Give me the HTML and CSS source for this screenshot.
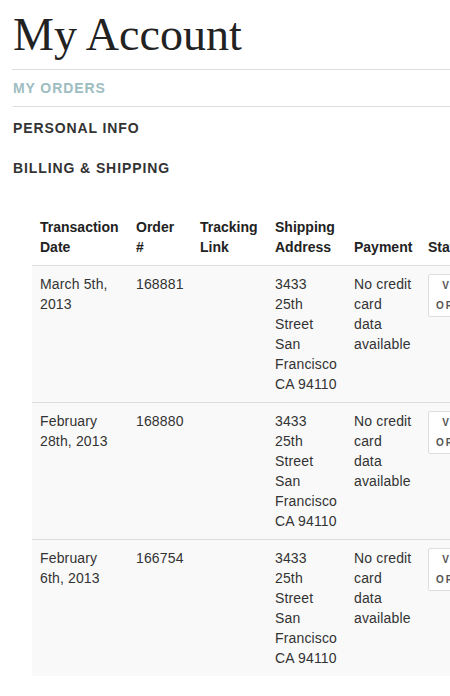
FILE: index.html
```html
<!DOCTYPE html>
<html lang="en">
<head>
<meta charset="utf-8">
<title>My Account</title>
<link rel="stylesheet" href="styles.css">
</head>
<body>
<div class="page">
  <h1 class="title">My Account</h1>
  <ul class="nav">
    <li class="nav-item active">My Orders</li>
    <li class="nav-item">Personal Info</li>
    <li class="nav-item">Billing &amp; Shipping</li>
  </ul>
  <table class="orders">
    <thead>
      <tr>
        <th class="c-date">Transaction Date</th>
        <th class="c-order">Order #</th>
        <th class="c-track">Tracking Link</th>
        <th class="c-addr">Shipping Address</th>
        <th class="c-pay">Payment</th>
        <th class="c-status">Status</th>
      </tr>
    </thead>
    <tbody>
      <tr>
        <td>March 5th, 2013</td>
        <td>168881</td>
        <td></td>
        <td>3433 25th Street San Francisco <span class="nw">CA 94110</span></td>
        <td>No credit card data available</td>
        <td><span class="btn">View Order</span></td>
      </tr>
      <tr>
        <td>February 28th, 2013</td>
        <td>168880</td>
        <td></td>
        <td>3433 25th Street San Francisco <span class="nw">CA 94110</span></td>
        <td>No credit card data available</td>
        <td><span class="btn">View Order</span></td>
      </tr>
      <tr class="last">
        <td>February 6th, 2013</td>
        <td>166754</td>
        <td></td>
        <td>3433 25th Street San Francisco <span class="nw">CA 94110</span></td>
        <td>No credit card data available</td>
        <td><span class="btn">View Order</span></td>
      </tr>
    </tbody>
  </table>
</div>
</body>
</html>
```

FILE: styles.css
```css
html, body {
  margin: 0;
  padding: 0;
  background: #fff;
  overflow: hidden;
}

body {
  font-family: "Liberation Sans", Arial, sans-serif;
  font-size: 14px;
  line-height: 20px;
  color: #333;
}

.page {
  padding: 12px 0 0 13px;
  overflow: hidden;
}

.title {
  margin: 0;
  padding: 0 0 11px;
  font-family: "Liberation Serif", "Times New Roman", serif;
  font-weight: normal;
  font-size: 46px;
  line-height: 46px;
  color: #222;
  border-bottom: 1px solid #ddd;
  margin-left: -1px;
  padding-left: 1px;
}

.nav {
  list-style: none;
  margin: 0;
  padding: 0;
}

.nav-item {
  padding: 11px 0 9px;
  font-size: 14px;
  line-height: 20px;
  font-weight: bold;
  text-transform: uppercase;
  letter-spacing: 0.9px;
  color: #333;
}

.nav-item.active {
  padding: 8px 0;
  color: #9dbdc0;
  border-bottom: 1px solid #ddd;
}

.orders {
  margin: 22px 0 0 19px;
  table-layout: fixed;
  width: 466px;
  border-collapse: separate;
  border-spacing: 0;
}

.orders th,
.orders td {
  box-sizing: border-box;
  padding: 8px;
  text-align: left;
  line-height: 20px;
}

.orders th {
  vertical-align: bottom;
  font-weight: bold;
  color: #222;
}

.orders td {
  vertical-align: top;
  background: #f9f9f9;
  border-top: 1px solid #ddd;
  letter-spacing: 0.15px;
}

.c-date { width: 96px; }
.c-order { width: 64px; }
.c-track { width: 75px; }
.c-addr { width: 79px; }
.c-pay { width: 74px; }
.c-status { width: 78px; }

.nw {
  white-space: nowrap;
}

.btn {
  display: inline-block;
  padding: 1px 7px 0;
  border: 1px solid #ddd;
  border-radius: 2px;
  background: #fff;
  font-size: 10px;
  line-height: 20px;
  font-weight: bold;
  letter-spacing: 2px;
  text-transform: uppercase;
  text-align: center;
  color: #555;
}
```
